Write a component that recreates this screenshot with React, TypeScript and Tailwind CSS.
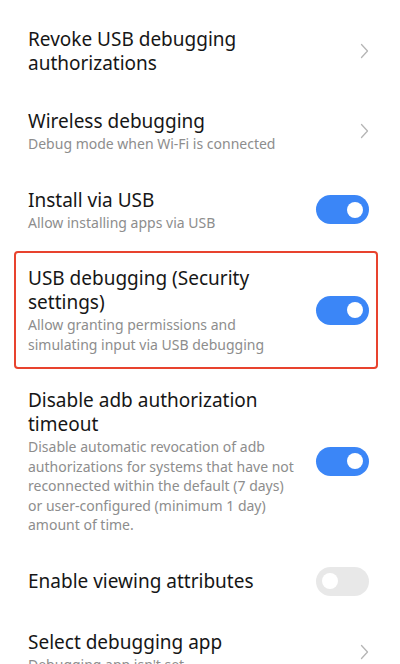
import React from "react";

const Chevron = () => (
  <svg width="9" height="16" viewBox="0 0 9 16" fill="none" className="shrink-0">
    <path d="M1.5 1.5 L7.5 8 L1.5 14.5" stroke="#b5b5b5" strokeWidth="1.3" strokeLinecap="round" strokeLinejoin="round" />
  </svg>
);

const Toggle = ({ on }: { on: boolean }) => (
  <div
    className={`shrink-0 w-[53px] h-[29px] rounded-full flex items-center px-[6px] ${
      on ? "bg-[#3b86f7] justify-end" : "bg-[#e8e8e8] justify-start"
    }`}
  >
    <div className="w-[16px] h-[16px] rounded-full bg-white" />
  </div>
);

type RowProps = {
  title: React.ReactNode;
  subtitle?: React.ReactNode;
  right: React.ReactNode;
  className?: string;
};

const Row = ({ title, subtitle, right, className = "" }: RowProps) => (
  <div className={`flex items-center justify-between ${className}`}>
    <div className="w-[272px]">
      <div className="text-[19px] leading-[24px] text-[#161616]">{title}</div>
      {subtitle && (
        <div className="text-[14px] leading-[19.5px] text-[#8d8d8d] mt-[1px]">{subtitle}</div>
      )}
    </div>
    {right}
  </div>
);

export default function App() {
  return (
    <div className="w-[400px] h-[664px] overflow-hidden bg-white font-['Noto_Sans',sans-serif]">
      <div className="pt-[10px]">
        {/* REVOKE */}
        <Row
          className="pl-7 pr-[31px] py-[17px]"
          title="Revoke USB debugging authorizations"
          right={<Chevron />}
        />
        {/* WIRELESS */}
        <Row
          className="pl-7 pr-[31px] py-[17px]"
          title="Wireless debugging"
          subtitle="Debug mode when Wi-Fi is connected"
          right={<Chevron />}
        />
        <Row
          className="pl-7 pr-[31px] py-[17px]"
          title="Install via USB"
          subtitle="Allow installing apps via USB"
          right={<Toggle on />}
        />
        {/* HIGHLIGHTED */}
        <div className="mx-[14px] mr-[22px] my-[2px] border-2 border-[#e8432e] rounded-[4px]">
          <Row
            className="pl-[12px] pr-[7px] py-[13px]"
            title="USB debugging (Security settings)"
            subtitle="Allow granting permissions and simulating input via USB debugging"
            right={<Toggle on />}
          />
        </div>
        <Row
          className="pl-7 pr-[31px] py-[17px]"
          title="Disable adb authorization timeout"
          subtitle="Disable automatic revocation of adb authorizations for systems that have not reconnected within the default (7 days) or user-configured (minimum 1 day) amount of time."
          right={<Toggle on={true} />}
        />
        <Row
          className="pl-7 pr-[31px] pt-[15px] pb-[17px]"
          title="Enable viewing attributes"
          right={<Toggle on={false} />}
        />
        <Row
          className="pl-7 pr-[31px] py-[17px]"
          title="Select debugging app"
          subtitle="Debugging app isn't set"
          right={<Chevron />}
        />
      </div>
    </div>
  );
}
